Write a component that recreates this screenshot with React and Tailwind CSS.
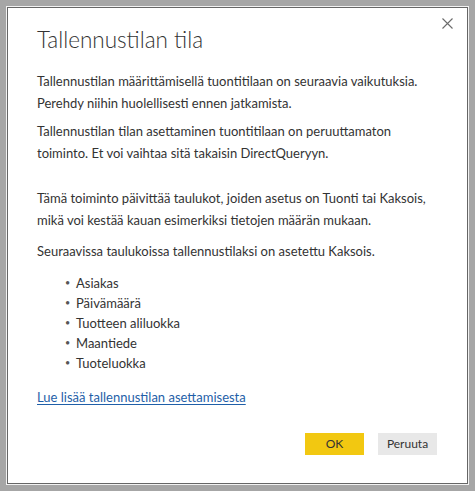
import React from 'react';

const tables = ['Asiakas', 'Päivämäärä', 'Tuotteen aliluokka', 'Maantiede', 'Tuoteluokka'];

const CloseIcon = () => (
  <svg width="11" height="11" viewBox="0 0 11 11" fill="none" stroke="#6b6b6b" strokeWidth="1.1">
    <path d="M0.5 0.5 L10.5 10.5 M10.5 0.5 L0.5 10.5" />
  </svg>
);

export default function App() {
  return (
    <div className="w-[475px] h-[491px] bg-[#a6a6a6] p-[6px] font-['Lato',sans-serif]">
      <div className="h-full border border-[#f2f2f2]">
        <div className="relative h-full border border-[#666666] bg-white pl-[29px] pr-[30px] pt-[16px] text-[#333333]">
          {/* close */}
          <button className="absolute right-[11px] top-[7px] p-[3px]">
            <CloseIcon />
          </button>

          <h1 className="text-[22.5px] leading-[32px] font-light text-[#333333]">
            Tallennustilan tila
          </h1>

          <div className="text-[13px] leading-[22px]">
            <p className="mt-[14px]">
              Tallennustilan määrittämisellä tuontitilaan on seuraavia vaikutuksia. Perehdy niihin huolellisesti ennen jatkamista.
            </p>
            <p className="mt-[6px]">
              Tallennustilan tilan asettaminen tuontitilaan on peruuttamaton toiminto. Et voi vaihtaa sitä takaisin DirectQueryyn.
            </p>
            <p className="mt-[23px]">
              Tämä toiminto päivittää taulukot, joiden asetus on Tuonti tai Kaksois, mikä voi kestää kauan esimerkiksi tietojen määrän mukaan.
            </p>
            <p className="mt-[9px]">
              Seuraavissa taulukoissa tallennustilaksi on asetettu Kaksois.
            </p>

            <ul className="mt-[11px] pl-[28px]">
              {tables.map((t) => (
                <li key={t} className="flex items-center leading-[20px]">
                  <span className="w-[11px] text-[9px] text-[#555555]">•</span>
                  <span>{t}</span>
                </li>
              ))}
            </ul>

            <a href="#" className="mt-[13px] inline-block text-[#1f5fa8] underline underline-offset-2">
              Lue lisää tallennustilan asettamisesta
            </a>
          </div>

          <div className="mt-[25px] flex justify-end gap-[14px]">
            <button className="w-[59px] h-[22px] bg-[#f2c811] text-[12px] text-[#333333]">OK</button>
            <button className="w-[59px] h-[22px] bg-[#e8e8e8] text-[12px] text-[#333333]">Peruuta</button>
          </div>
        </div>
      </div>
    </div>
  );
}
